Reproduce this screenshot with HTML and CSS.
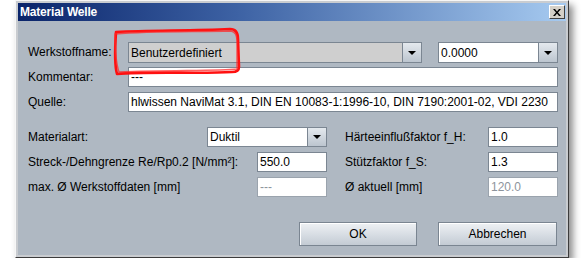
FILE: index.html
```html
<!DOCTYPE html>
<html>
<head>
  <title>Material Welle</title>
  <link rel="stylesheet" href="styles.css">
</head>
<body>
  <div class="window">
    <div class="titlebar">
      <span class="title">Material Welle</span>
      <span class="close">
        <svg width="8" height="7" viewBox="0 0 8 7"><path d="M0 0h2l2 2.5 2-2.5h2l-3 3.5 3 3.5h-2l-2-2.5-2 2.5h-2l3-3.5z" fill="#000"/></svg>
      </span>
    </div>
    <div class="content">
      <div class="top-grid">
        <label>Werkstoffname:</label>
        <div class="row-pair">
          <div class="combo combo-ro combo-wide">
            <span class="combo-text">Benutzerdefiniert</span>
            <span class="combo-btn"><i class="tri"></i></span>
          </div>
          <div class="combo combo-small">
            <span class="combo-text">0.0000</span>
            <span class="combo-btn"><i class="tri"></i></span>
          </div>
        </div>
        <label>Kommentar:</label>
        <div class="field">---</div>
        <label>Quelle:</label>
        <div class="field clip">hlwissen NaviMat 3.1, DIN EN 10083-1:1996-10, DIN 7190:2001-02, VDI 2230</div>
      </div>

      <div class="param-grid">
        <label>Materialart:</label>
        <div class="combo combo-mat">
          <span class="combo-text">Duktil</span>
          <span class="combo-btn"><i class="tri"></i></span>
        </div>
        <span></span>
        <label>Härteeinflußfaktor f_H:</label>
        <div class="field num">1.0</div>

        <label class="wide-label">Streck-/Dehngrenze Re/Rp0.2 [N/mm²]:</label>
        <div class="field num">550.0</div>
        <span></span>
        <label>Stützfaktor f_S:</label>
        <div class="field num">1.3</div>

        <label class="wide-label">max. Ø Werkstoffdaten [mm]</label>
        <div class="field num disabled">---</div>
        <span></span>
        <label>Ø aktuell [mm]</label>
        <div class="field num disabled">120.0</div>
      </div>

      <div class="buttons">
        <button class="btn btn-ok">OK</button>
        <button class="btn btn-cancel">Abbrechen</button>
      </div>
    </div>
  </div>

  <!-- rote Markierung (Annotation) -->
  <svg class="marker" width="136" height="54" viewBox="0 0 136 54">
    <path d="M6 5 C40 3 80 4 120 2 C126 2 128 6 128 12 L129 40 C129 44 126 45 122 45 C90 47 40 44 7 47 C5 40 5 20 6 5 Z" fill="none" stroke="#ff1010" stroke-width="2.6" stroke-linejoin="round"/>
    <path d="M5 7 C42 4 82 5 121 4 C126 5 127 9 127 14 L127 42 C110 44 60 43 9 45 C6 36 5 20 5 7 Z" fill="none" stroke="#ff2a2a" stroke-width="1.4" opacity="0.75"/>
  </svg>
</body>
</html>
```

FILE: styles.css
```css
/* Dialog "Material Welle" im Metal-Look */
body {
  margin: 0;
  background: #fff;
  font-family: "Liberation Sans", Arial, sans-serif;
  font-size: 12px;
  color: #000;
  position: relative;
}

.window {
  box-sizing: border-box;
  width: 554px;
  height: 258px;
  margin-left: 15px;
  border: 1px solid;
  border-color: #f6f6f6 #3c3c3c #3c3c3c #f6f6f6;
  padding: 2px;
  background: #c9ccd0;
  box-shadow: 4px 5px 7px rgba(0, 0, 0, 0.45);
  display: flex;
  flex-direction: column;
}

.titlebar {
  height: 18px;
  display: flex;
  align-items: center;
  justify-content: space-between;
  background: linear-gradient(to right, #0a246a, #3d62a4 40%, #a6caf0);
  padding: 0 1px 0 2px;
}

.title {
  color: #fff;
  font-weight: bold;
  font-size: 12px;
  letter-spacing: -0.2px;
}

.close {
  box-sizing: border-box;
  width: 16px;
  height: 14px;
  background: #d4d0c8;
  border: 1px solid;
  border-color: #fff #404040 #404040 #fff;
  display: flex;
  align-items: center;
  justify-content: center;
}

.content {
  flex: 1;
  background: #afb8c2;
  padding: 21px 8px 9px 10px;
  display: flex;
  flex-direction: column;
}

label {
  display: flex;
  align-items: center;
  white-space: nowrap;
}

.top-grid {
  display: grid;
  grid-template-columns: 100px 1fr;
  grid-auto-rows: 20px;
  row-gap: 5px;
}

.row-pair {
  display: flex;
  gap: 16px;
}

.field {
  box-sizing: border-box;
  height: 20px;
  background: #fff;
  border: 1px solid #7b8692;
  padding: 0 2px;
  display: flex;
  align-items: center;
  white-space: nowrap;
  overflow: hidden;
}

.field.disabled {
  color: #8d949c;
  border-color: #9aa3ad;
}

.combo {
  box-sizing: border-box;
  height: 21px;
  background: #fff;
  border: 1px solid #7b8692;
  display: flex;
}

.combo-ro {
  background: #cfcfcf;
}

.combo-wide { width: 294px; }
.combo-small { width: 120px; }
.combo-mat { width: 120px; }

.combo-text {
  flex: 1;
  padding-left: 2px;
  display: flex;
  align-items: center;
}

.combo-btn {
  width: 18px;
  border-left: 1px solid #7b8692;
  background: linear-gradient(#e4e9ee, #bcc5cf);
  display: flex;
  align-items: center;
  justify-content: center;
}

.tri {
  width: 0;
  height: 0;
  border-left: 4px solid transparent;
  border-right: 4px solid transparent;
  border-top: 4px solid #000;
}

.param-grid {
  display: grid;
  grid-template-columns: 179px 120px 18px 143px 70px;
  grid-auto-rows: 20px;
  row-gap: 5px;
  margin-top: 15px;
}

.param-grid .combo {
  height: 20px;
}

.wide-label {
  overflow: visible;
}

.param-grid .num {
  width: 70px;
  justify-self: end;
}

.buttons {
  display: flex;
  justify-content: flex-end;
  gap: 21px;
  margin-top: 25px;
  padding-right: 1px;
}

.btn {
  box-sizing: border-box;
  height: 24px;
  border: 1px solid #7a8591;
  box-shadow: inset 1px 1px 0 #fff;
  background: linear-gradient(#eef1f4, #c3cbd4);
  font-family: "Liberation Sans", Arial, sans-serif;
  font-size: 12px;
  color: #000;
  padding: 0;
}

.btn-ok { width: 118px; }
.btn-cancel { width: 119px; }

.marker {
  position: absolute;
  left: 110px;
  top: 27px;
}
```
